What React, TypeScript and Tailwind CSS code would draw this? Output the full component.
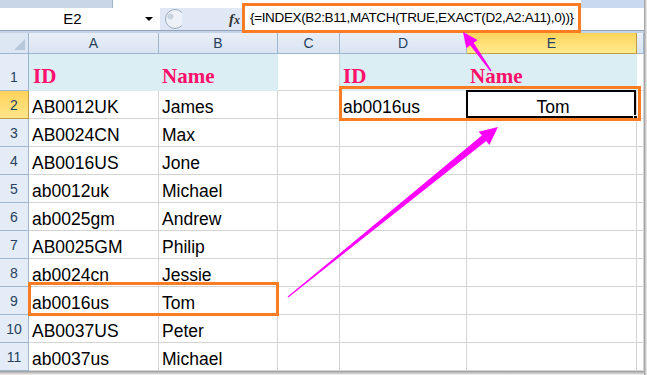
import React from "react";

const data: [string, string][] = [
  ["AB0012UK", "James"],
  ["AB0024CN", "Max"],
  ["AB0016US", "Jone"],
  ["ab0012uk", "Michael"],
  ["ab0025gm", "Andrew"],
  ["AB0025GM", "Philip"],
  ["ab0024cn", "Jessie"],
  ["ab0016us", "Tom"],
  ["AB0037US", "Peter"],
  ["ab0037us", "Michael"],
];

const hdr =
  "flex items-center justify-center border-r border-b border-[#9eb6ce] bg-gradient-to-b from-[#e9eff8] to-[#d9e4f2] text-[14px] text-[#27415f]";
const cell = "flex items-end border-r border-b border-[#d4d4d4] pl-[3px] pb-[1px] text-[17.5px] leading-[20px] text-black";
const rn = "flex items-end justify-center border-r border-b border-[#9eb6ce] pb-[5px] text-[14px] leading-[16px] text-[#27415f]";
const title = "font-['Liberation_Serif',serif] font-bold text-[21px] leading-[24px] text-[#ff0f6b]";

export default function App() {
  return (
    <div className="relative h-[375px] w-[647px] overflow-hidden bg-white font-['Liberation_Sans',Arial,sans-serif]">
      {/* formula bar */}
      <div className="flex h-[33px] w-[644px]">
        <div className="flex w-[242px] flex-col">
          <div className="flex h-[8px] bg-[#c9d6e8]">
            <div className="w-[112px]" />
            <div className="flex-1 border-l border-[#a0b4cc] bg-white" />
          </div>
          <div className="flex h-[22px]">
            <div className="flex w-[160px] items-center bg-white">
              <div className="flex w-[145px] justify-center text-[15px] leading-[18px] text-black">E2</div>
              <div className="h-0 w-0 border-x-[4px] border-t-[4px] border-x-transparent border-t-black" />
            </div>
            <div className="flex flex-1 items-center bg-[#dfe8f4]">
              <svg width="20" height="22" viewBox="0 0 20 22" className="ml-[2px]">
                <circle cx="13" cy="11" r="9.5" fill="#eef2f8" stroke="#9aabc0" strokeWidth="1" />
                <circle cx="8.5" cy="8.5" r="3" fill="#cbd3de" />
              </svg>
              <div className="ml-auto mr-[2px] font-['Liberation_Serif',serif] text-[15px] font-bold italic leading-[18px] text-[#333]">
                f<span className="text-[12px]">x</span>
              </div>
            </div>
          </div>
          <div className="h-[3px] border-t border-[#8fa3bd] bg-[#c6d3e4]" />
        </div>
        <div className="mt-[3px] flex h-[30px] w-[339px] items-center border-[3px] border-[#fb7c22] bg-white pl-[5px] text-[13.5px] tracking-[-0.35px] text-black">
          {"{=INDEX(B2:B11,MATCH(TRUE,EXACT(D2,A2:A11),0))}"}
        </div>
        <div className="flex flex-1 flex-col">
          <div className="h-[8px] bg-[#c9d9ee]" />
          <div className="h-[22px] bg-white" />
          <div className="h-[3px] border-t border-[#8fa3bd] bg-[#c6d3e4]" />
        </div>
      </div>

      {/* column header */}
      <div className="flex h-[21px] w-[644px]">
        <div className="relative w-[29px] border-r border-b border-[#9eb6ce] bg-[#dde7f3]">
          <div className="absolute bottom-[3px] right-[3px] h-0 w-0 border-b-[11px] border-l-[11px] border-b-[#b8c7da] border-l-transparent" />
        </div>
        <div className={`${hdr} w-[130px]`}>A</div>
        <div className={`${hdr} w-[119px]`}>B</div>
        <div className={`${hdr} w-[62px]`}>C</div>
        <div className={`${hdr} w-[127px]`}>D</div>
        <div className="flex w-[170px] items-center justify-center border-r border-b border-[#c29b48] bg-gradient-to-b from-[#ffd35a] to-[#ffeb8f] text-[14px] text-[#27415f]">
          E
        </div>
        <div className={`${hdr} w-[7px]`} />
      </div>

      {/* row 1 */}
      <div className="flex h-[37px] w-[644px]">
        <div className={`${rn} w-[29px] bg-[#e4ecf7]`}>1</div>
        <div className="flex w-[249px] items-end bg-[#daeef3] pb-[3px]">
          <div className={`${title} w-[130px] pl-[4px]`}>ID</div>
          <div className={`${title} pl-[3px]`}>Name</div>
        </div>
        <div className="w-[62px] border-r border-b border-[#d4d4d4]" />
        <div className="flex w-[297px] items-end bg-[#daeef3] pb-[3px]">
          <div className={`${title} w-[127px] pl-[3px]`}>ID</div>
          <div className={`${title} pl-[3px]`}>Name</div>
        </div>
        <div className="w-[7px] border-r border-b border-[#d4d4d4]" />
      </div>

      {/* data rows */}
      {data.map(([id, name], i) => {
        const n = i + 2;
        const sel = n === 2;
        return (
          <div key={n} className="flex h-[28px] w-[644px]">
            <div
              className={
                sel
                  ? "flex w-[29px] items-end justify-center border-r border-b border-[#c29b48] bg-gradient-to-b from-[#ffd35a] to-[#ffe58a] pb-[5px] text-[14px] leading-[16px] text-[#27415f]"
                  : `${rn} w-[29px] bg-[#e4ecf7]`
              }
            >
              {n}
            </div>
            <div className={`${cell} w-[130px]`}>{id}</div>
            <div className={`${cell} w-[119px]`}>{name}</div>
            <div className={`${cell} w-[62px]`} />
            <div className={`${cell} w-[127px]`}>{sel ? "ab0016us" : ""}</div>
            <div className={`${cell} relative w-[170px] ${sel ? "justify-center" : ""}`}>
              {sel ? (
                <>
                  <span>Tom</span>
                  <div className="absolute -left-[1px] -top-[1px] bottom-0 right-0 border-2 border-black" />
                  <div className="absolute -bottom-[2px] -right-[2px] h-[5px] w-[5px] border border-white bg-black" />
                </>
              ) : null}
            </div>
            <div className={`${cell} w-[7px]`} />
          </div>
        );
      })}

      {/* shadows */}
      <div className="absolute left-0 top-[371px] h-[4px] w-[647px] bg-gradient-to-b from-[#9a9a9a] to-[#f4f4f4]" />
      <div className="absolute right-0 top-0 h-[375px] w-[3px] bg-gradient-to-r from-[#9a9a9a] to-[#f4f4f4]" />

      {/* annotations */}
      <div className="pointer-events-none absolute left-[339px] top-[86px] h-[35px] w-[302px] border-[3px] border-[#fb7c22]" />
      <div className="pointer-events-none absolute left-[28px] top-[282px] h-[34px] w-[251px] border-[3px] border-[#fb7c22]" />
      <svg className="pointer-events-none absolute left-0 top-0" width="647" height="375" viewBox="0 0 647 375">
        <polygon
          fill="#ff00ff"
          points="463,32 477.6,39.9 473.7,42.7 491.6,70.5 490.4,71.5 470.2,45.3 466.3,48.2"
        />
        <polygon
          fill="#ff00ff"
          points="498,127 489.3,144.9 486.2,141 288.3,297.4 287.7,296.6 481.8,135.6 478.7,131.7"
        />
      </svg>
    </div>
  );
}
